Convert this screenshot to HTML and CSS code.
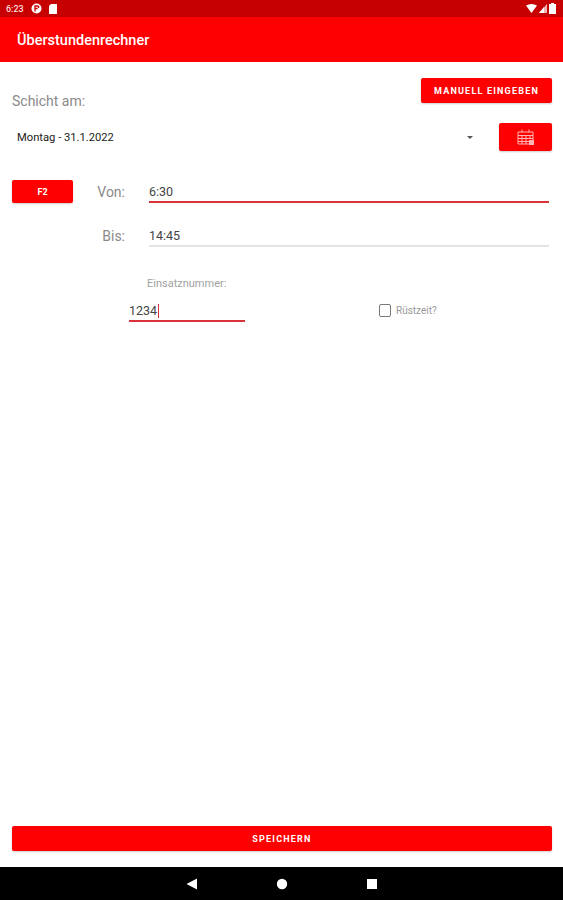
FILE: index.html
```html
<!DOCTYPE html>
<html lang="de">
<head>
    <meta charset="UTF-8">
    <meta name="viewport" content="width=device-width, initial-scale=1.0">
    <title>Überstundenrechner</title>
    <link rel="stylesheet" href="styles.css">
</head>
<body>
    <div class="status-bar">
        <div class="status-left">
            <span class="clock">6:23</span>
            <svg class="status-icon" width="11" height="11" viewBox="0 0 11 11"><circle cx="5.5" cy="5.5" r="5" fill="#fff"/><path d="M4 8.5V3h3.6M4 5.5h2.6M7.6 3v2" fill="none" stroke="#c00" stroke-width="1.3"/></svg>
            <svg class="status-icon" width="8" height="10" viewBox="0 0 8 10"><path d="M2 0h6v10H0V2z" fill="#fff"/></svg>
        </div>
        <div class="status-right">
            <svg width="11" height="9" viewBox="0 0 11 9"><path d="M0 1.6Q5.500-1.600 11 1.600L5.500 9z" fill="#fff"/></svg>
            <svg width="8" height="9" viewBox="0 0 8 9"><path d="M8 0v9H0z" fill="#f3b3b3"/><path d="M5 3v6H0z" fill="#fff"/></svg>
            <svg width="7" height="11" viewBox="0 0 7 11"><path d="M2 0h3v1h2v10H0V1h2z" fill="#fff"/></svg>
        </div>
    </div>
    <header class="app-bar">Überstundenrechner</header>

    <main class="content">
        <div class="shift-head">
            <span class="shift-label">Schicht am:</span>
            <button class="btn btn-manual">MANUELL EINGEBEN</button>
        </div>
        <div class="date-row">
            <span class="date-value">Montag - 31.1.2022</span>
            <span class="date-arrow"></span>
            <button class="btn btn-calendar">
                <svg width="18" height="17" viewBox="0 0 18 17" fill="none" stroke="#ffb4b4" stroke-width="1">
                    <path d="M5 .5v3M12 .5v3M1 3h15v12H1zM1 6.500h15M1 9.500h15M1 12.500h11M5 6.500v8.500M9 6.500v8.500M13 6.500v3"/>
                    <rect x="12" y="11" width="5" height="5" fill="#ffb4b4" stroke="none"/>
                </svg>
            </button>
        </div>

        <div class="time-row time-from">
            <button class="btn btn-shift">F2</button>
            <label class="time-label">Von:</label>
            <div class="time-field active">6:30</div>
        </div>
        <div class="time-row time-to">
            <label class="time-label">Bis:</label>
            <div class="time-field">14:45</div>
        </div>

        <div class="number-label">Einsatznummer:</div>
        <div class="number-row">
            <div class="number-field">1234<span class="caret"></span></div>
            <label class="check-wrap">
                <span class="check-box"></span>
                <span class="check-text">Rüstzeit?</span>
            </label>
        </div>
    </main>

    <div class="save-wrap">
        <button class="btn btn-save">SPEICHERN</button>
    </div>
    <nav class="nav-bar">
        <svg width="12" height="12" viewBox="0 0 12 12"><path d="M11 .5v11L.5 6z" fill="#fff"/></svg>
        <svg width="12" height="12" viewBox="0 0 12 12"><circle cx="6" cy="6" r="5.200" fill="#fff"/></svg>
        <svg width="12" height="12" viewBox="0 0 12 12"><rect x="1" y="1" width="10" height="10" fill="#fff"/></svg>
    </nav>
</body>
</html>
```

FILE: styles.css
```css
* {
    box-sizing: border-box;
}

body {
    margin: 0;
    height: 100vh;
    display: flex;
    flex-direction: column;
    background-color: #fff;
    color: #333;
    font-family: 'Roboto', 'Liberation Sans', sans-serif;
}

.status-bar {
    height: 17px;
    display: flex;
    justify-content: space-between;
    align-items: center;
    padding: 0 6px;
    background-color: #c60000;
    color: #fbdcdc;
}

.status-left,
.status-right {
    display: flex;
    align-items: center;
}

.status-left {
    gap: 7px;
}

.status-right {
    gap: 2px;
    padding-right: 1px;
}

.clock {
    font-size: 9px;
    font-weight: 500;
}

.app-bar {
    height: 45px;
    padding: 0 17px;
    line-height: 48px;
    background-color: #f00;
    color: #fff;
    font-size: 14.500px;
    font-weight: 500;
}

.content {
    flex: 1;
    padding: 16px 11px 0 12px;
}

.btn {
    border: none;
    border-radius: 2px;
    padding: 0;
    background-color: #f00;
    color: #fff;
    font-family: inherit;
    font-size: 9px;
    font-weight: 700;
    letter-spacing: 1.200px;
    box-shadow: 0 1px 2px rgba(0, 0, 0, 0.2);
}

.shift-head {
    display: flex;
    justify-content: space-between;
    align-items: flex-end;
}

.shift-label {
    font-size: 14px;
    color: #8a8a8a;
    line-height: 16px;
    margin-bottom: -6px;
}

.btn-manual {
    width: 131px;
    height: 25px;
}

.date-row {
    display: flex;
    align-items: center;
    height: 28px;
    margin-top: 20px;
    padding-left: 5px;
}

.date-value {
    flex: 1;
    font-size: 11.200px;
    color: #222;
}

.date-arrow {
    width: 0;
    height: 0;
    margin-right: 26px;
    border-left: 3px solid transparent;
    border-right: 3px solid transparent;
    border-top: 3px solid #555;
}

.btn-calendar {
    width: 53px;
    height: 28px;
    display: flex;
    justify-content: center;
    align-items: center;
}

.time-row {
    display: flex;
    align-items: center;
    height: 23px;
}

.time-from {
    margin-top: 29px;
}

.time-to {
    margin-top: 21px;
}

.btn-shift {
    width: 61px;
    height: 23px;
    letter-spacing: 0;
}

.time-label {
    width: 52px;
    margin-right: 24px;
    text-align: right;
    font-size: 14px;
    color: #8a8a8a;
}

.time-to .time-label {
    margin-left: 61px;
}

.time-field {
    flex: 1;
    height: 23px;
    margin-right: 3px;
    line-height: 24px;
    font-size: 12.500px;
    color: #444;
    border-bottom: 2px solid #e4e4e4;
}

.time-field.active {
    border-bottom: 2px solid #d9323a;
}

.number-label {
    margin-top: 30px;
    padding-left: 135px;
    font-size: 11px;
    line-height: 14px;
    color: #a2a2a2;
}

.number-row {
    display: flex;
    align-items: center;
    margin-top: 7px;
    padding-left: 117px;
}

.number-field {
    width: 116px;
    height: 24px;
    line-height: 26px;
    font-size: 12.500px;
    color: #444;
    border-bottom: 2px solid #d9323a;
}

.caret {
    display: inline-block;
    width: 1px;
    height: 14px;
    margin-left: 1px;
    vertical-align: -3px;
    background-color: #d9323a;
}

.check-wrap {
    display: flex;
    align-items: center;
    gap: 5px;
    margin-left: 134px;
}

.check-box {
    width: 12px;
    height: 13px;
    border: 1.500px solid #777;
    border-radius: 2px;
}

.check-text {
    font-size: 10px;
    color: #999;
}

.save-wrap {
    padding: 0 11px 16px 12px;
}

.btn-save {
    display: block;
    width: 100%;
    height: 25px;
}

.nav-bar {
    height: 33px;
    display: flex;
    justify-content: center;
    align-items: center;
    gap: 78px;
    background-color: #000;
}
```
